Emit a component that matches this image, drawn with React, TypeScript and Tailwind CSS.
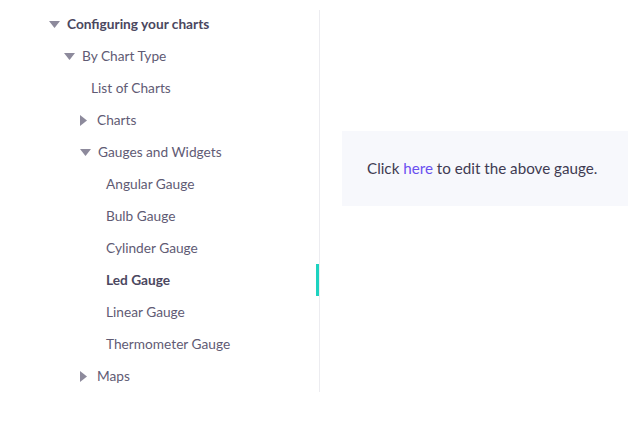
import React from "react";

type navItem = {
  label: string;
  level: number;
  caret?: "down" | "right";
  bold?: boolean;
  active?: boolean;
};

const items: navItem[] = [
  { label: "Configuring your charts", level: 0, caret: "down", bold: true },
  { label: "By Chart Type", level: 1, caret: "down" },
  { label: "List of Charts", level: 2 },
  { label: "Charts", level: 2, caret: "right" },
  { label: "Gauges and Widgets", level: 2, caret: "down" },
  { label: "Angular Gauge", level: 3 },
  { label: "Bulb Gauge", level: 3 },
  { label: "Cylinder Gauge", level: 3 },
  { label: "Led Gauge", level: 3, bold: true, active: true },
  { label: "Linear Gauge", level: 3 },
  { label: "Thermometer Gauge", level: 3 },
  { label: "Maps", level: 2, caret: "right" },
];

// left edge of the caret, or of the text when there is no caret
const caretLeft = ["pl-[49px]", "pl-[64px]", "pl-[80px]", "pl-[106px]"];
const textLeft = ["pl-[67px]", "pl-[82px]", "pl-[91px]", "pl-[106px]"];

const Caret: React.FC<{ dir: "down" | "right" }> = ({ dir }) =>
  dir === "down" ? (
    <svg width="11" height="7" viewBox="0 0 11 7" className="mr-[7px] shrink-0">
      <path d="M0 0 H11 L5.5 7 Z" fill="#8d8a9c" />
    </svg>
  ) : (
    <svg width="7" height="11" viewBox="0 0 7 11" className="mr-[10px] shrink-0">
      <path d="M0 0 V11 L7 5.5 Z" fill="#8d8a9c" />
    </svg>
  );

const App: React.FC = () => {
  return (
    <div
      className="flex w-[628px] h-[442px] bg-white"
      style={{ fontFamily: "'Source Sans Pro', Lato, 'Noto Sans', sans-serif" }}
    >
      <div className="w-[320px] shrink-0 mt-[10px] h-[382px] border-r border-[#ececf0]">
        <ul className="-mt-[2px]">
          {items.map((it) => (
            <li
              key={it.label}
              className={`relative h-8 flex items-center text-[13.7px] ${
                it.caret ? caretLeft[it.level] : textLeft[it.level]
              } ${it.bold ? "font-bold text-[#4b4760]" : "text-[#5f5b74]"}`}
            >
              {it.caret && <Caret dir={it.caret} />}
              <span>{it.label}</span>
              {it.active && (
                <span className="absolute right-0 top-0 h-8 w-[3px] bg-[#1dd3c0]" />
              )}
            </li>
          ))}
        </ul>
      </div>
      <div className="flex-1 pl-[22px] pt-[131px]">
        <div className="h-[75px] bg-[#f7f8fc] flex items-center pl-[25px] text-[15.2px] text-[#3f3b52]">
          <p>
            Click <a className="text-[#6a4ff0]">here</a> to edit the above gauge.
          </p>
        </div>
      </div>
    </div>
  );
};

export default App;
